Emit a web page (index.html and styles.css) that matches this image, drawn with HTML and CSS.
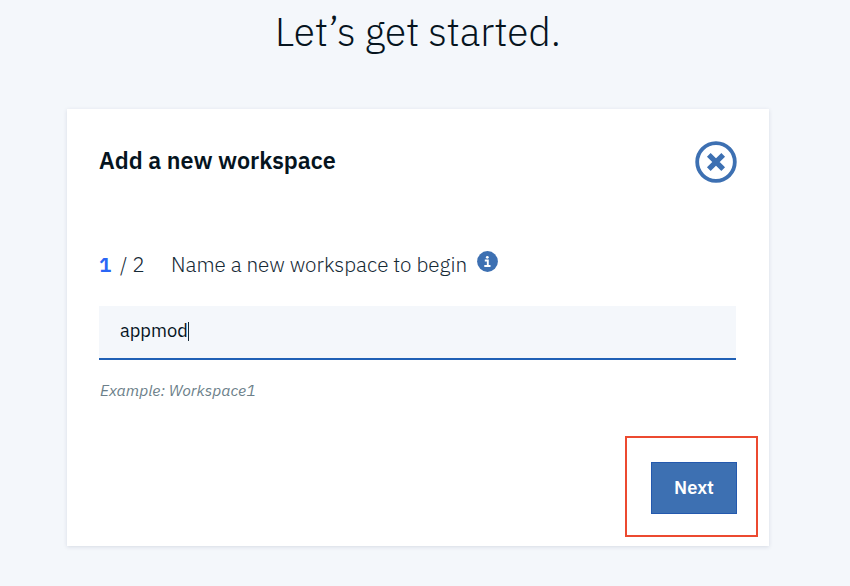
FILE: index.html
```html
<!DOCTYPE html>
<html lang="en">
<head>
<meta charset="utf-8">
<title>Add a new workspace</title>
<link rel="stylesheet" href="styles.css">
</head>
<body>
<main class="page">
  <h1 class="title">Let’s get started.</h1>
  <section class="card">
    <header class="card-header">
      <h2 class="heading">Add a new workspace</h2>
      <svg class="close" viewBox="0 0 42 42" width="42" height="42" role="img" aria-label="Close">
        <circle cx="21" cy="21" r="18.8" fill="none" stroke="currentColor" stroke-width="3.8"/>
        <path d="M13.8 13.8 28.2 28.2M28.2 13.8 13.8 28.2" stroke="currentColor" stroke-width="5.2"/>
      </svg>
    </header>
    <div class="step">
      <span class="current">1</span>
      <span class="total">/ 2</span>
      <span class="prompt">Name a new workspace to begin</span>
      <svg class="info" viewBox="0 0 21 21" width="21" height="21" role="img" aria-label="Information">
        <circle cx="10.5" cy="10.5" r="10.4" fill="currentColor"/>
        <circle cx="10.3" cy="6.3" r="1.4" fill="#fff"/>
        <path d="M7.8 9.5h3v5.2M7.3 15h6.2" fill="none" stroke="#fff" stroke-width="1.9"/>
      </svg>
    </div>
    <div class="field"><span class="value">appmod</span><span class="caret"></span></div>
    <p class="hint">Example: Workspace1</p>
    <div class="actions">
      <div class="highlight"><button class="next" type="button">Next</button></div>
    </div>
  </section>
</main>
</body>
</html>
```
FILE: styles.css
```css
* { box-sizing: border-box; }
body {
  margin: 0;
  height: 586px;
  overflow: hidden;
  background: #f4f7fb;
  color: #152935;
  font-family: "IBM Plex Sans", Roboto, "Liberation Sans", sans-serif;
}
.page { width: 702px; margin-left: 67px; }
.title {
  margin: 0;
  height: 109px;
  padding-top: 8px;
  text-align: center;
  font-size: 38.9px;
  line-height: 48px;
  font-weight: 300;
  white-space: nowrap;
  color: #06141e;
}
.card {
  height: 437px;
  padding: 32px 33px 0 32px;
  background: #fff;
  box-shadow: 0 1px 4px rgba(40, 60, 90, 0.14);
}
.card-header {
  display: flex;
  justify-content: space-between;
  height: 108px;
}
.heading {
  margin: 0;
  font-size: 23.35px;
  line-height: 39px;
  font-weight: 600;
  color: #06141e;
}
.close { margin-right: -1px; color: #3d70b2; }
.step {
  display: flex;
  height: 57px;
  font-size: 20.7px;
  line-height: 32px;
  font-weight: 300;
  white-space: nowrap;
}
.current { width: 21px; color: #2a66f5; font-weight: 600; }
.total { width: 51px; }
.prompt { width: 306px; }
.info { margin-top: 2px; color: #3d70b2; }
.field {
  display: flex;
  align-items: center;
  height: 54px;
  padding: 0 21px 5px;
  background: #f4f7fb;
  border-bottom: 2px solid #2060b5;
  font-size: 18.3px;
  color: #06141e;
}
.caret { width: 1px; height: 19px; margin-top: 3px; background: #152935; }
.hint {
  margin: 0;
  padding: 19px 0 0 1px;
  height: 76px;
  font-size: 15.8px;
  line-height: 22px;
  font-style: italic;
  color: #6c7f8a;
}
.actions { display: flex; justify-content: flex-end; }
.highlight {
  width: 133px;
  height: 101px;
  margin-right: -22px;
  padding: 24px 0 0 24px;
  border: 2px solid #ec4a30;
}
.next {
  display: block;
  width: 86px;
  height: 52px;
  padding: 0 0 3px;
  border: 1px solid #2459ae;
  background: #3d70b2;
  color: #fff;
  font: 600 18.3px "IBM Plex Sans", Roboto, sans-serif;
}
```
